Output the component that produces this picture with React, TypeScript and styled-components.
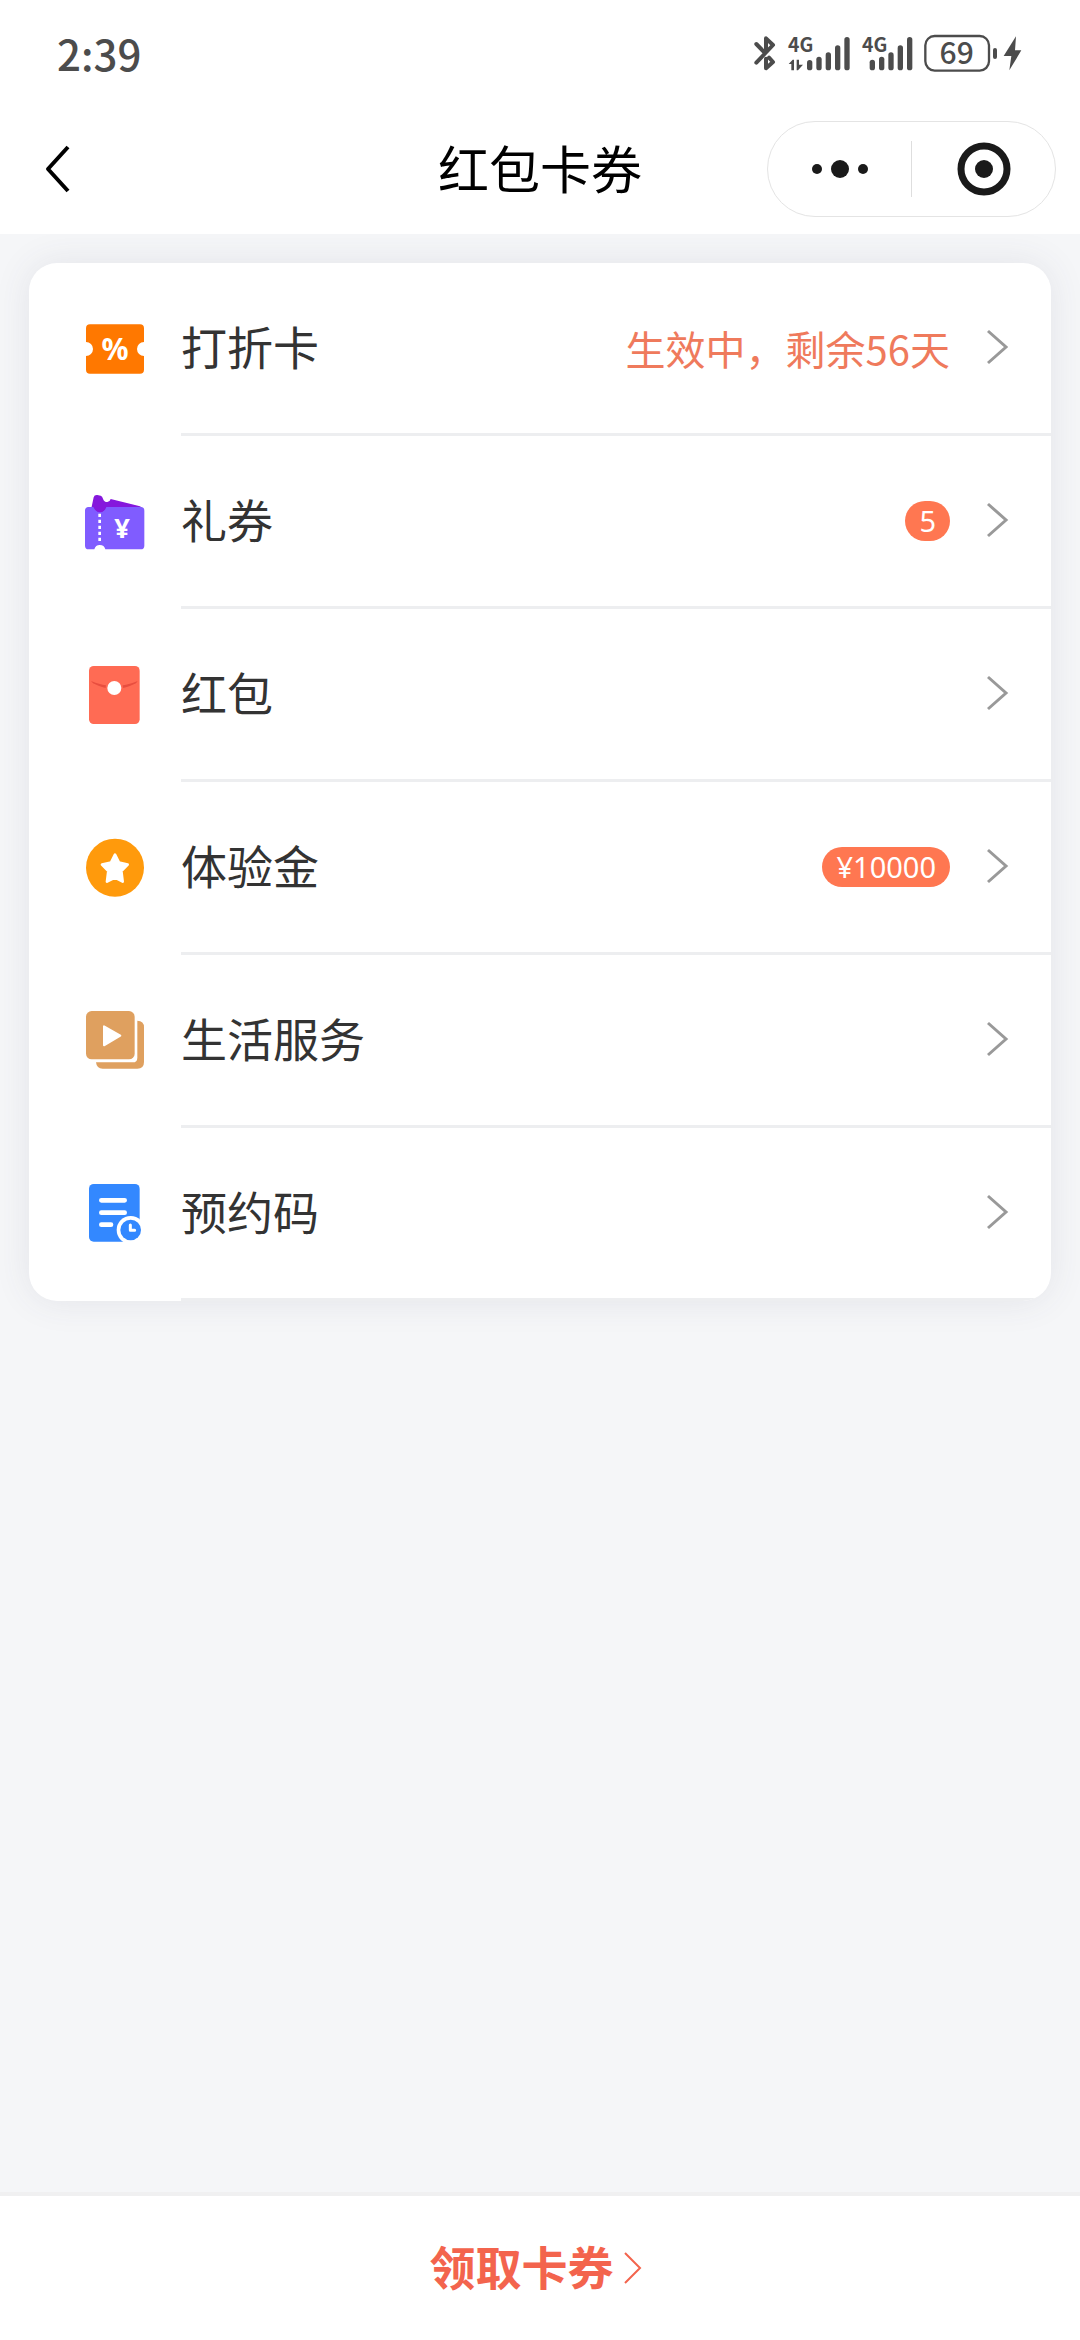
import React from 'react';
import styled, { createGlobalStyle } from 'styled-components';

const fontStack = '"Noto Sans CJK SC", "Noto Sans", sans-serif';

const GlobalStyle = createGlobalStyle`
  *, *::before, *::after { box-sizing: border-box; }
  body {
    margin: 0;
    background: #f5f6f8;
    font-family: ${fontStack};
  }
  button {
    margin: 0;
    padding: 0;
    border: 0;
    background: none;
    font: inherit;
    color: inherit;
    cursor: pointer;
  }
  svg { display: block; flex: none; overflow: visible; }
`;

const Page = styled.div`
  min-height: 100vh;
  display: flex;
  flex-direction: column;
`;

const Header = styled.header`
  background: #fff;
  padding-bottom: 2px;
`;

const StatusBar = styled.div`
  height: 106px;
  padding: 0 58px 0 57px;
  display: flex;
  align-items: center;
  justify-content: space-between;
  color: #4c4c4c;
`;

const Clock = styled.time`
  font-size: 42px;
  line-height: 48px;
  font-weight: 500;
`;

const StatusIcons = styled.div`
  display: flex;
  align-items: center;
  gap: 12px;
`;

const NavBar = styled.div`
  height: 126px;
  padding: 0 24px;
  display: grid;
  grid-template-columns: 1fr auto 1fr;
  align-items: center;
`;

const BackButton = styled.button`
  width: 68px;
  height: 64px;
  display: flex;
  align-items: center;
  justify-content: center;
`;

const Title = styled.h1`
  margin: 0;
  padding-bottom: 4px;
  font-size: 51px;
  line-height: 60px;
  font-weight: 400;
  color: #000;
`;

const Capsule = styled.div`
  justify-self: end;
  width: 289px;
  height: 96px;
  border: 1px solid #e4e4e4;
  border-radius: 48px;
  display: flex;
  align-items: center;
`;

const CapsuleButton = styled.button`
  flex: 1;
  height: 56px;
  display: flex;
  align-items: center;
  justify-content: center;
  & + & { border-left: 1px solid #dedede; }
`;

const Main = styled.main`
  flex: 1;
  padding: 29px;
  overflow: hidden;
`;

const Card = styled.ul`
  margin: 0;
  padding: 0;
  list-style: none;
  background: #fff;
  border-radius: 28px;
  overflow: hidden;
  box-shadow: 0 0 36px rgba(70, 70, 100, 0.1);
`;

const Row = styled.a`
  height: 173px;
  padding-left: 56px;
  display: flex;
  gap: 36px;
  color: #333;
  text-decoration: none;
`;

const RowIcon = styled.span`
  display: flex;
  align-items: center;
  border-bottom: 3px solid transparent;
`;

const RowBody = styled.span`
  flex: 1;
  padding-right: 43px;
  display: flex;
  align-items: center;
  gap: 36px;
  border-bottom: 3px solid #edeef0;
`;

const RowLabel = styled.span`
  flex: 1;
  padding-bottom: 6px;
  font-size: 46px;
  line-height: 60px;
`;

const RowNote = styled.span`
  font-size: 40px;
  line-height: 60px;
  color: #ef7a5c;
`;

const Badge = styled.span`
  height: 40px;
  padding: 0 14px;
  border-radius: 20px;
  background: #ff7751;
  color: #fff;
  font-family: "Noto Sans", sans-serif;
  font-size: 29px;
  line-height: 40px;
`;

const Footer = styled.footer`
  height: 148px;
  border-top: 4px solid #f0f0f1;
  background: #fff;
  display: flex;
  align-items: center;
  justify-content: center;
`;

const ClaimButton = styled.button`
  padding-right: 10px;
  display: flex;
  align-items: center;
  gap: 10px;
  font-size: 46px;
  line-height: 60px;
  font-weight: 700;
  color: #f3644d;
`;

const ClaimLabel = styled.span`
  padding-bottom: 6px;
`;

const Bluetooth = () => (
  <svg width="22" height="38" viewBox="72 42 66 114" fill="none" stroke="currentColor" strokeWidth="12" strokeLinecap="round" strokeLinejoin="round" aria-label="蓝牙">
    <path d="M79 72 103 97M108 86V55L129 75 79 128M108 116V145L129 126 117 113" />
  </svg>
);

interface SignalProps {
  data?: boolean;
}

const Signal = ({ data }: SignalProps) => {
  const tops = [data ? 120 : 119, 110, 97, 76, 51];
  const start = data ? 57 : 23;
  return (
    <svg width={data ? 62 : 50} height="38" viewBox={data ? '0 42 186 114' : '0 42 150 114'} fill="currentColor">
      <text x="0" y="97" fontSize="58" fontWeight="700" fontFamily={fontStack}>4G</text>
      {tops.map((top, i) => (
        <rect key={top} x={start + i * 28} y={top} width="16" height={151 - top} rx="8" stroke="#fff" strokeWidth="3" paintOrder="stroke" />
      ))}
      {data && <path d="M2 132 14 119H18V151H10V132ZM26 119H33V134H45L30 151H26Z" />}
    </svg>
  );
};

const Battery = () => (
  <svg width="98" height="38" viewBox="582 42 294 114" fill="currentColor">
    <rect x="586" y="48" width="191" height="104" rx="28" fill="none" stroke="currentColor" strokeWidth="7" />
    <rect x="789" y="84" width="12" height="33" rx="6" />
    <text x="680" y="133" fontSize="90" fontWeight="500" textAnchor="middle" fontFamily={fontStack}>69</text>
    <path d="M858 49 821 108H844L838 151 874 91H855Z" />
  </svg>
);

const DiscountIcon = () => (
  <svg width="60" height="60" viewBox="195 204 180 180">
    <path fill="#ff7800" d="M210 223H360a12 12 0 0 1 12 12V276a21 21 0 0 0 0 42V359a12 12 0 0 1-12 12H210a12 12 0 0 1-12-12V318a21 21 0 0 0 0-42V235a12 12 0 0 1 12-12Z" />
    <text x="285" y="331" fontSize="90" fontWeight="700" textAnchor="middle" fill="#fff" fontFamily='"Noto Sans", sans-serif'>%</text>
  </svg>
);

const GiftIcon = () => (
  <svg width="60" height="60" viewBox="195 723 180 180">
    <path fill="#8517dc" d="M214 775 221 742Q223 734 232 735L242 737Q247 739 249 746 252 756 262 756 270 755 272 747L360 769 372 778 300 790H214Z" />
    <path fill="#805cff" d="M205 771H224a16 16 0 0 0 32 0H362a11 11 0 0 1 11 11V887a11 11 0 0 1-11 11H256a17 17 0 0 0-33 0H206a11 11 0 0 1-11-11V782a11 11 0 0 1 10-11Z" />
    <path fill="#8517dc" d="M219 768H260Q256 785 239 786 224 784 219 768Z" />
    <path stroke="#fff" strokeWidth="8" strokeDasharray="10 8" d="M239 791V876" />
    <text x="306" y="863" fontSize="82" fontWeight="700" textAnchor="middle" fill="#fff" fontFamily='"Noto Sans", sans-serif'>¥</text>
  </svg>
);

const RedPacketIcon = () => (
  <svg width="60" height="60" viewBox="195 222 180 180">
    <rect x="207" y="228" width="152" height="174" rx="14" fill="#ff6b54" />
    <path fill="#e84e3f" d="M213 273Q283 304 353 273L348 280Q283 313 219 280Z" />
    <circle cx="283" cy="294" r="26" fill="#ff6b54" />
    <circle cx="283" cy="294" r="21" fill="#fff" />
  </svg>
);

const StarCoinIcon = () => (
  <svg width="60" height="60" viewBox="195 741 180 180">
    <circle cx="285" cy="833" r="87" fill="#ff9a0c" />
    <path fill="#fff" stroke="#fff" strokeWidth="8" strokeLinejoin="round" d="M285 794 297 818 323 824 304 843 308 875 285 863 261 875 265 843 246 824 273 818Z" />
  </svg>
);

const ServiceIcon = () => (
  <svg width="60" height="60" viewBox="195 180 180 180" fill="#dfa05f">
    <path d="M352 212Q372 212 372 232V336Q372 356 352 356H248Q230 356 228 337H338Q352 337 352 323Z" />
    <rect x="198" y="183" width="146" height="145" rx="17" />
    <path fill="#fff" stroke="#fff" strokeWidth="6" strokeLinejoin="round" d="M252 229V286L301 257Z" />
  </svg>
);

const BookingIcon = () => (
  <svg width="60" height="60" viewBox="195 699 180 180">
    <rect x="207" y="702" width="152" height="173" rx="14" fill="#3388ff" />
    <path stroke="#fff" strokeWidth="14" strokeLinecap="round" d="M244 751H314M244 788H314M244 824H273" />
    <circle cx="332" cy="840" r="42" fill="#fff" />
    <circle cx="332" cy="840" r="31" fill="#3388ff" />
    <path fill="none" stroke="#fff" strokeWidth="9" strokeLinecap="round" strokeLinejoin="round" d="M331 825V841H344" />
  </svg>
);

const RowChevron = () => (
  <svg width="22" height="38" viewBox="0 0 22 38" fill="none" stroke="#999" strokeWidth="3">
    <path d="M2 2 20 18 2 34" />
  </svg>
);

interface Item {
  label: string;
  icon: React.ReactNode;
  note?: string;
  badge?: string;
}

const items: Item[] = [
  { label: '打折卡', icon: <DiscountIcon />, note: '生效中，剩余56天' },
  { label: '礼券', icon: <GiftIcon />, badge: '5' },
  { label: '红包', icon: <RedPacketIcon /> },
  { label: '体验金', icon: <StarCoinIcon />, badge: '¥10000' },
  { label: '生活服务', icon: <ServiceIcon /> },
  { label: '预约码', icon: <BookingIcon /> },
];

export default function App() {
  return (
    <Page lang="zh-CN">
      <GlobalStyle />
      <Header>
        <StatusBar>
          <Clock>2:39</Clock>
          <StatusIcons>
            <Bluetooth />
            <Signal data />
            <Signal />
            <Battery />
          </StatusIcons>
        </StatusBar>
        <NavBar>
          <BackButton aria-label="返回">
            <svg width="24" height="46" viewBox="0 0 24 46" fill="none" stroke="#000" strokeWidth="4" strokeLinejoin="round">
              <path d="M22 1 2 23 22 45" />
            </svg>
          </BackButton>
          <Title>红包卡券</Title>
          <Capsule>
            <CapsuleButton aria-label="更多">
              <svg width="58" height="20" viewBox="0 0 58 20" fill="#1a1a1a">
                <circle cx="6" cy="10" r="5" />
                <circle cx="29" cy="10" r="9" />
                <circle cx="52" cy="10" r="5" />
              </svg>
            </CapsuleButton>
            <CapsuleButton aria-label="关闭">
              <svg width="54" height="54" viewBox="0 0 54 54" fill="#1a1a1a">
                <circle cx="27" cy="27" r="23" fill="none" stroke="#1a1a1a" strokeWidth="7" />
                <circle cx="27" cy="27" r="9" />
              </svg>
            </CapsuleButton>
          </Capsule>
        </NavBar>
      </Header>
      <Main>
        <Card>
          {items.map((item) => (
            <li key={item.label}>
              <Row href="#">
                <RowIcon>{item.icon}</RowIcon>
                <RowBody>
                  <RowLabel>{item.label}</RowLabel>
                  {item.note && <RowNote>{item.note}</RowNote>}
                  {item.badge && <Badge>{item.badge}</Badge>}
                  <RowChevron />
                </RowBody>
              </Row>
            </li>
          ))}
        </Card>
      </Main>
      <Footer>
        <ClaimButton>
          <ClaimLabel>领取卡券</ClaimLabel>
          <svg width="17" height="32" viewBox="0 0 17 32" fill="none" stroke="currentColor" strokeWidth="2">
            <path d="M1 1 16 16 1 31" />
          </svg>
        </ClaimButton>
      </Footer>
    </Page>
  );
}
